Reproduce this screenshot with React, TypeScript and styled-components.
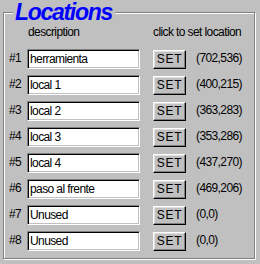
import styled, { createGlobalStyle } from 'styled-components';

const GlobalStyle = createGlobalStyle`
  html, body {
    margin: 0;
    padding: 0;
    background: #c0c0c0;
  }
  body {
    font-family: "Liberation Sans", Arial, sans-serif;
    font-size: 12px;
    letter-spacing: -0.6px;
    color: #000;
  }
`;

const LOCATIONS = [
  { description: 'herramienta', coords: '(702,536)' },
  { description: 'local 1', coords: '(400,215)' },
  { description: 'local 2', coords: '(363,283)' },
  { description: 'local 3', coords: '(353,286)' },
  { description: 'local 4', coords: '(437,270)' },
  { description: 'paso al frente', coords: '(469,206)' },
  { description: 'Unused', coords: '(0,0)' },
  { description: 'Unused', coords: '(0,0)' },
];

const Page = styled.div`
  width: 260px;
  height: 264px;
  padding: 0 5px 0 3px;
  box-sizing: border-box;
`;

const GroupBox = styled.fieldset`
  margin: 0;
  min-width: 0;
  padding: 1px 0 7px 5px;
  border: 1px solid #808080;
  box-shadow: inset 1px 1px 0 #fff, 1px 1px 0 #fff;
  height: 259px;
  box-sizing: border-box;
`;

const Title = styled.legend`
  margin-left: 4px;
  padding: 0 3px 0 2px;
  background: #c0c0c0;
  font-weight: bold;
  font-style: italic;
  font-size: 23px;
  line-height: 24px;
  letter-spacing: -1.3px;
  color: #0000ff;
`;

const Header = styled.div`
  display: flex;
  height: 14px;
  line-height: 14px;
  margin-bottom: 10px;
`;

const HeaderCell = styled.span<{ $offset: number; $width?: number }>`
  margin-left: ${(p) => p.$offset}px;
  width: ${(p) => (p.$width ? `${p.$width}px` : 'auto')};
  white-space: nowrap;
`;

const Rows = styled.div`
  display: flex;
  flex-direction: column;
  gap: 6px;
`;

const Row = styled.div`
  display: flex;
  align-items: center;
  height: 20px;
`;

const Index = styled.span`
  width: 18px;
  margin-top: -2px;
`;

const TextField = styled.input`
  width: 113px;
  height: 20px;
  box-sizing: border-box;
  margin: 0;
  padding: 0 2px 0 2px;
  font: inherit;
  letter-spacing: inherit;
  color: #000;
  background: #fff;
  border: 1px solid;
  border-color: #808080 #fff #fff #808080;
  box-shadow: inset 1px 1px 0 #000, inset -1px -1px 0 #c0c0c0;
  outline: none;
`;

const SetButton = styled.button`
  width: 33px;
  height: 19px;
  margin: 0 0 0 13px;
  padding: 0;
  box-sizing: border-box;
  font: inherit;
  color: #000;
  letter-spacing: 0.8px;
  background: #c0c0c0;
  border: 1px solid;
  border-color: #fff #000 #000 #fff;
  box-shadow: inset -1px -1px 0 #808080, inset 1px 1px 0 #dfdfdf;
`;

const Coords = styled.span`
  margin-left: 10px;
  margin-top: -3px;
  white-space: nowrap;
`;

export default function App() {
  return (
    <Page>
      <GlobalStyle />
      <GroupBox>
        <Title>Locations</Title>
        <Header>
          <HeaderCell $offset={19} $width={125}>description</HeaderCell>
          <HeaderCell $offset={0}>click to set location</HeaderCell>
        </Header>
        <Rows>
          {LOCATIONS.map((item, index) => (
            <Row key={index}>
              <Index>#{index + 1}</Index>
              <TextField defaultValue={item.description} />
              <SetButton>SET</SetButton>
              <Coords>{item.coords}</Coords>
            </Row>
          ))}
        </Rows>
      </GroupBox>
    </Page>
  );
}
